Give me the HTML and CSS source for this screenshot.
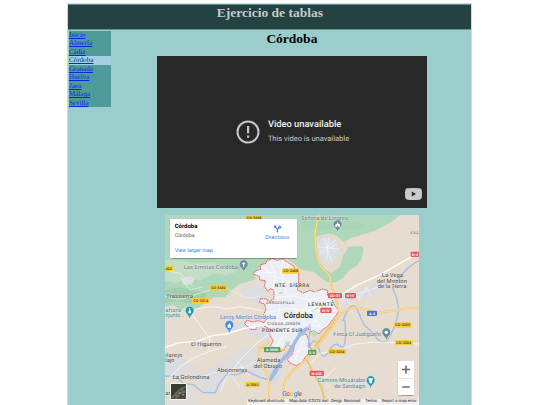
FILE: index.html
```
<!DOCTYPE html>
<html lang="es">

<head>
	<meta charset="UTF-8">
	<meta name="viewport" content="width=device-width, initial-scale=1.0">
	<title>Ejercicio de tablas</title>
	<link rel="stylesheet" href="styles.css">
</head>

<body>
	<div class="page">
		<header>
			<h1>Ejercicio de tablas</h1>
		</header>
		<div class="content">
			<nav>
				<a href="#">Inicio</a>
				<a href="#">Almería</a>
				<a href="#">Cádiz</a>
				<a href="#" class="active">Córdoba</a>
				<a href="#">Granada</a>
				<a href="#">Huelva</a>
				<a href="#">Jaen</a>
				<a href="#">Málaga</a>
				<a href="#">Sevilla</a>
			</nav>
			<main>
				<h2>Córdoba</h2>
				<div class="video">
					<svg class="video-error" viewBox="0 0 24 24">
						<circle cx="12" cy="12" r="10.5" fill="none" stroke="#c6c6c6" stroke-width="2" />
						<path d="M11 6h2.2v7.3H11zM11 15.5h2.2v2.2H11z" fill="#c6c6c6" />
					</svg>
					<div class="video-message">
						<div class="video-title">Video unavailable</div>
						<div class="video-reason">This video is unavailable</div>
					</div>
					<svg class="video-logo" viewBox="0 0 17 12">
						<path d="M2.5.3Q8.5-.3 14.5.3 16.6.4 16.8 2.5 17.2 6 16.8 9.5 16.6 11.6 14.5 11.7 8.5 12.3 2.5 11.7.4 11.6.2 9.5-.2 6 .2 2.5.4.4 2.5.3z" fill="#c9c9c9" />
						<path d="M6.8 3.6v4.8L11 6z" fill="#282828" />
					</svg>
				</div>
				<div class="map">
					<svg class="map-canvas" viewBox="15 15 762 570">
						<defs>
							<path id="pin" d="M0 20Q-2 10-9 4A13 13 0 1 1 9 4Q2 10 0 20z" />
						</defs>
						<rect x="15" y="15" width="762" height="570" fill="#e6dccf" />

						<!-- woodland -->
						<path d="M15 15H720L700 32 672 48 645 62 600 76 572 84 548 98 550 116 566 110 607 108 610 122 604 150 590 168 566 182 548 205 522 218 500 216 480 200 462 186 440 182 420 176 400 160 380 146 345 148 322 160 300 172 280 190 288 208 270 212 240 222 216 240 194 262 160 262 138 278 110 296 80 290 60 300 40 286 15 290z" fill="#aed8b9" />
						<path d="M15 150L60 152 110 160 160 156 200 172 236 182 200 196 160 190 120 212 84 200 50 220 15 212z" fill="#c3dec4" />
						<path d="M62 208L86 198 106 204 98 220 70 226z" fill="#dadfe0" />
						<path d="M15 240L60 232 100 240 140 250 130 268 90 280 50 272 15 280z" fill="#9fcfae" />
						<path d="M420 30L500 40 560 32 620 44 590 60 530 54 480 62 430 50z" fill="#a8d5b6" />
						<path d="M468 82Q510 60 534 82L562 104Q566 120 550 134L540 170 514 190 494 178 474 150z" fill="#e2dacb" />
						<path d="M470 100L490 78 512 84 534 104 540 132 524 150 516 168 494 156 474 132z" fill="#dbdee3" />

						<!-- built-up areas -->
						<path d="M246 230L300 226 318 240 316 286 280 278 244 262zM528 262L570 250 610 236 648 220 668 222 660 244 620 262 580 274 550 290zM190 352L250 336 330 332 330 392 280 384 260 360 200 366z" fill="#dddce0" />
						<path d="M190 455L240 420 290 410 300 450 320 482 300 500 250 480 200 500 180 545 140 560 120 520 140 480zM15 450L60 440 110 470 130 500 110 520 60 500 15 490zM320 485L370 460 366 500 340 530 320 515z" fill="#dcdcde" />
						<path d="M15 530H100L120 585H15z" fill="#dfddda" />

						<!-- city -->
						<path d="M320 152L338 146 352 151 368 147 380 155 402 169 405 184 416 190 416 222 412 240 430 249 450 241 465 246 486 237 503 241 502 255 515 265 524 286 537 302 526 320 514 334 502 350 486 360 478 372 460 362 450 367 444 352 428 360 418 377 405 392 396 410 380 405 366 424 344 426 330 410 340 392 330 376 330 358 310 346 288 352 288 359 272 358 262 348 254 342 260 330 276 336 296 332 312 338 322 324 310 314 318 300 314 282 298 277 301 266 318 267 330 274 342 266 342 240 330 236 324 244 313 230 316 212 300 210 298 199 278 192 288 182 302 178 300 165 318 160z" fill="#eceef3" stroke="#e25f62" stroke-width="2.8" stroke-dasharray="6 1.5" />
						<path d="M428 371L440 374 446 392 450 412 458 424 436 440 428 456 408 467 388 458 382 448 398 432 404 404 414 384z" fill="#eceef3" stroke="#e25f62" stroke-width="2.8" stroke-dasharray="6 1.5" />
						<path d="M376 396l14-2-2 12-12 2zM456 362l12 4 4 10-10 6-8-8zM357 247l12-2v6l-12 2zM452 300l20-10 2 6-18 10z" fill="#b9e0c0" />
						<path d="M467 302l14 2 6 12-12 4zM382 304l10 6-8 8z" fill="#f9efd0" />

						<!-- river -->
						<path d="M777 152Q740 170 718 206T698 236Q720 280 714 312T690 378 650 384 620 352 596 308 562 304 550 330 556 372 540 408 506 424 476 416 452 404 448 378 440 356 424 368 404 402 380 438 360 462 348 482 330 500M330 510L300 502 262 484 230 494 200 494 178 520 166 548 130 548 100 524 70 520 50 500 15 498" fill="none" stroke="#a4bfe6" stroke-width="4" />
						<path d="M444 354L424 366 404 398 380 438 360 458 344 490 328 512" fill="none" stroke="#9fbce8" stroke-width="10" />

						<!-- local streets -->
						<g fill="none" stroke="#fff" stroke-width="2.2">
							<path d="M15 412L60 398 110 394 160 376 200 372 250 356 300 348 350 340 410 322 470 290 530 262 590 226 660 194 720 160 777 128" stroke-width="4" />
							<path d="M96 312L130 360 150 384 146 420M96 312L112 296 160 290 200 296 240 290 310 302M15 520L60 470 110 440 160 420 200 410M180 545L200 500 250 440 290 400 330 370M530 424L580 404 640 396 690 398 777 402M440 470L480 430 520 424M460 480L500 500 530 470" />
							<path d="M528 90L480 128M492 84L516 156M472 110L540 118M476 136L532 100M505 80L500 150" stroke-width="1.5" />
							<path d="M540 290L560 254 600 262 620 232M570 282L550 252M600 270L580 242M632 256L616 228M530 272L660 230" stroke-width="1.5" />
							<path d="M130 500L180 482 260 470 310 440M200 480L240 530M230 450L270 500" stroke-width="1.5" />
						</g>
						<g fill="none" stroke="#fff" stroke-width="2">
							<path d="M310 170L340 200 380 210 412 240M330 155L346 190 340 230 360 290 350 340M370 150L364 190 376 240 400 290 430 330 444 352M342 262L400 258 450 270 500 262M320 308L380 296 440 300 530 302M330 370L380 360 420 340 490 352M346 420L370 370 400 330 440 290 470 242M350 390L376 420M440 250L450 300 480 350M500 250L490 300 450 350M400 430L440 412M404 450L430 390M350 185L300 190M385 165L360 230" />
						</g>
						<path d="M15 258Q50 276 90 260T160 238 200 236 240 256 300 256M60 200L90 240 130 230M15 180L60 190 100 230" fill="none" stroke="#eef3ea" stroke-width="2" />

						<!-- main roads -->
						<g fill="none" stroke="#efc66f" stroke-width="6">
							<path d="M478 15Q462 54 466 100T482 170L508 196 514 226 526 260 534 290 540 310 530 330 510 360 488 390 464 418 440 448 400 480 376 510 368 545 372 585" />
							<path d="M777 292L730 296 690 304 650 308 610 296 580 292 552 304 536 318 510 350 488 378 464 410M330 396L304 410 294 430 302 460 320 490 328 520 326 585M296 412L340 420 376 420M440 448L460 490 484 530 498 585" />
						</g>
						<g fill="none" stroke="#ffe3a2" stroke-width="2.5">
							<path d="M478 15Q462 54 466 100T482 170L508 196 514 226 526 260 534 290 540 310 530 330 510 360 488 390 464 418 440 448 400 480 376 510 368 545 372 585M777 292L730 296 690 304 650 308 610 296 580 292 552 304 536 318M330 396L304 410 294 430 302 460 320 490 328 520 326 585" />
						</g>

						<!-- road numbers -->
						<g fill="#f5ce3a">
							<rect x="257" y="15" width="50" height="16" rx="3" />
							<rect x="15" y="167" width="24" height="16" rx="3" />
							<rect x="148" y="226" width="54" height="16" rx="3" />
							<rect x="96" y="264" width="52" height="16" rx="3" />
							<rect x="366" y="175" width="52" height="16" rx="3" />
							<rect x="702" y="337" width="52" height="16" rx="3" />
							<rect x="705" y="390" width="53" height="16" rx="3" />
							<rect x="505" y="417" width="53" height="16" rx="3" />
							<rect x="256" y="516" width="44" height="16" rx="3" />
						</g>
						<g fill="#e3585f">
							<rect x="504" y="249" width="42" height="16" rx="3" />
							<rect x="555" y="249" width="33" height="16" rx="3" />
							<rect x="481" y="293" width="34" height="16" rx="3" />
							<rect x="752" y="125" width="25" height="16" rx="3" />
							<rect x="449" y="482" width="43" height="16" rx="3" />
						</g>
						<rect x="312" y="411" width="49" height="16" rx="3" fill="#57a05b" />
						<rect x="444" y="419" width="25" height="16" rx="3" fill="#57a05b" />
						<rect x="621" y="302" width="30" height="16" rx="3" fill="#4478c4" />
						<g class="shield dark">
							<text x="282" y="28">CO-3408</text>
							<text x="26" y="179">402</text>
							<text x="175" y="238">CO-3402</text>
							<text x="122" y="276">CO-3314</text>
							<text x="392" y="187">CO-3408</text>
							<text x="728" y="349">CO-3200</text>
							<text x="731" y="402">CO-3204</text>
							<text x="531" y="429">CO-3204</text>
							<text x="278" y="528">A-3051</text>
						</g>
						<g class="shield light">
							<text x="525" y="261">CO-31</text>
							<text x="571" y="261">N-IV</text>
							<text x="498" y="305">N-IV</text>
							<text x="765" y="137">N-4</text>
							<text x="470" y="494">N-432</text>
							<text x="336" y="423">A-3050</text>
							<text x="456" y="431">E-5</text>
							<text x="636" y="314">A-4</text>
						</g>

						<!-- places -->
						<g class="place">
							<text x="19" y="263" textLength="80">Trassierra</text>
							<text x="93" y="409" textLength="91">El Higueron</text>
							<text x="16" y="440" textLength="51">ilarejo</text>
							<text x="16" y="457" textLength="27">lajo</text>
							<text x="171" y="487" textLength="91">Abejorreras</text>
							<text x="38" y="508" textLength="110">La Golondrina</text>
							<text x="290" y="456" textLength="71">Alameda</text>
							<text x="282" y="473" textLength="84">del Obispo</text>
							<text x="665" y="200" textLength="64">La Vega</text>
							<text x="651" y="218" textLength="90">del Montón</text>
							<text x="653" y="235" textLength="86">de la Tierra</text>
							<text x="16" y="554">an</text>
						</g>
						<g class="district">
							<text x="344" y="230" textLength="104">NTE. SIERRA</text>
							<text x="444" y="287" textLength="76">LEVANTE</text>
							<text x="306" y="366" textLength="121">PONIENTE SUR</text>
							<text x="318" y="283" textLength="85" class="minor">ARRUZAFILLA</text>
							<text x="322" y="346" textLength="98" class="minor">CIUDAD JARDÍN</text>
							<text x="750" y="71" textLength="26" class="minor">VAL</text>
						</g>
						<text x="371" y="325" textLength="88" class="city">Córdoba</text>
						<g class="poi gray">
							<text x="71" y="178" textLength="163">Las Ermitas Córdoba</text>
							<text x="423" y="29" textLength="141">Señora de Linares</text>
							<text x="520" y="379" textLength="143">Finca El Judigüelo</text>
						</g>
						<g class="poi teal">
							<text x="16" y="306" textLength="58">ahara -</text>
							<text x="16" y="322" textLength="56">njunto...</text>
							<text x="472" y="516" textLength="143">Camino Mozárabe</text>
							<text x="523" y="534" textLength="92">de Santiago</text>
						</g>
						<text x="180" y="328" textLength="168" class="poi blue">Leroy Merlin Córdoba</text>

						<!-- pins -->
						<g stroke="#fff" stroke-width="1">
							<use href="#pin" x="251" y="168" fill="#6f8a98" />
							<use href="#pin" x="533" y="48" fill="#6f8a98" />
							<use href="#pin" x="679" y="372" fill="#6f8a98" />
							<use href="#pin" x="89" y="307" fill="#239aab" />
							<use href="#pin" x="632" y="516" fill="#239aab" />
							<use href="#pin" x="208" y="350" fill="#4687ef" />
						</g>
						<g fill="#fff">
							<path d="M249.5 156h3v4h4v3h-4v9h-3v-9h-4v-3h4z" />
							<path d="M526 51v-7l3-3 2 2v-3l2-4 2 4v3l2-2 3 3v7h-5v-4h-4v4z" />
							<circle cx="679" cy="367" r="5" />
							<path d="M88 294h2.5v6l2.5 4v6h-7.5v-6l2.5-4z" />
							<path d="M626 504h3v2.500h1.500V504h3v2.500h1.500V504h3v6l-2.500 2 .5 8h-8l.5-8-2.500-2z" />
							<path d="M203 345h2q0-5 3-5t3 5h2v8h-10z" />
						</g>

						<text x="366" y="557" textLength="60" class="google"><tspan fill="#4285f4">G</tspan><tspan fill="#ea4335">o</tspan><tspan fill="#fbbc05">o</tspan><tspan fill="#4285f4">g</tspan><tspan fill="#34a853">l</tspan><tspan fill="#ea4335">e</tspan></text>
					</svg>
					<div class="map-card">
						<div class="map-info">
							<strong>Córdoba</strong>
							<span>Córdoba</span>
							<a href="#">View larger map</a>
						</div>
						<a href="#" class="directions">
							<svg viewBox="0 0 10 10">
								<path d="M5 9.5V6L2.5 3.2M5 6L6.5 3.5H8" fill="none" stroke="#4285e8" stroke-width="1.3" />
								<path d="M1.2 1.7h3.2L1.2 4.900zM7.2 1.2L9.5 3.5 7.2 5.8z" fill="#4285e8" />
							</svg>
							Directions
						</a>
					</div>
					<svg class="satellite" viewBox="0 0 16 16">
						<rect width="16" height="16" fill="#4a4c3e" />
						<path d="M0 0h16v5L9 7 4 12 0 13z" fill="#353f33" />
						<path d="M1 15L6 9 11 5 16 3M5 16L9 10 15 8" fill="none" stroke="#777360" stroke-width="1.5" />
						<path d="M8 9h2v1H8zM11 6h2v1h-2zM5 12h1v1H5zM12 11h2v1h-2z" fill="#b8aa94" />
					</svg>
					<div class="zoom-buttons">
						<svg viewBox="0 0 16 17"><path d="M4 8.5h8M8 4.5v8" /></svg>
						<svg viewBox="0 0 16 17"><path d="M4 8.5h8" /></svg>
					</div>
					<div class="map-footer">
						<span>Keyboard shortcuts</span>
						<span>Map data ©2023 Inst. Geogr. Nacional</span>
						<span>Terms</span>
						<span>Report a map error</span>
					</div>
				</div>
			</main>
		</div>
	</div>
</body>

</html>
```
FILE: styles.css
```
body {
	margin: 0;
	background-color: #fff;
	font-family: "Liberation Serif", serif;
	overflow: hidden;
}

.page {
	box-sizing: border-box;
	width: 405px;
	height: 402px;
	margin: 3px 0 0 67.4px;
	border: 1px solid #c5e2e2;
	border-bottom: 0;
	background-color: #9ccdcd;
}

header {
	box-sizing: border-box;
	height: 26px;
	border: 1px solid #688f8e;
	border-width: 1px 0;
	background-color: #234241;
}

h1 {
	margin: 0;
	color: #c3cbca;
	font-size: 13.5px;
	line-height: 15px;
	text-align: center;
}

.content {
	display: flex;
}

nav {
	width: 42px;
	padding: 1px 0 0 .5px;
	margin-right: 1.5px;
	flex: none;
}

nav a {
	display: block;
	height: 8.45px;
	background-color: #4d9b9a;
	color: #0828d8;
	font-size: 7.1px;
	line-height: 8.45px;
	text-rendering: geometricPrecision;
}

nav .active {
	background-color: #a5cfe0;
}

main {
	display: flex;
	flex: 1;
	flex-direction: column;
	align-items: center;
}

h2 {
	height: 17px;
	margin: 1px 0 7.6px;
	font-size: 13.5px;
	line-height: 16px;
}

.video {
	position: relative;
	display: flex;
	box-sizing: border-box;
	width: 270px;
	height: 152px;
	padding: 64px 0 0 79px;
	background-color: #282828;
	font-family: Roboto, sans-serif;
}

.video-error {
	width: 24px;
	height: 24px;
}

.video-message {
	margin-left: 8px;
	text-rendering: geometricPrecision;
}

.video-title {
	color: #eee;
	font-size: 9.3px;
	font-weight: 500;
	line-height: 10px;
}

.video-reason {
	margin-top: 4px;
	color: #c8c8c8;
	font-size: 7.5px;
	line-height: 10px;
}

.video-logo {
	position: absolute;
	right: 5px;
	bottom: 7.5px;
	width: 17px;
	height: 12px;
}

.map {
	position: relative;
	width: 253.5px;
	height: 190px;
	margin-top: 7px;
	overflow: hidden;
	font-family: Roboto, sans-serif;
	text-rendering: geometricPrecision;
}

.map-canvas {
	display: block;
	width: 254px;
	height: 190px;
}

.map-canvas text {
	paint-order: stroke;
	stroke: rgba(244, 241, 235, .6);
	stroke-width: 2px;
	stroke-linejoin: round;
}

.map-canvas .shield text {
	font-size: 11px;
	font-weight: 700;
	stroke: none;
	text-anchor: middle;
}

.dark {
	fill: #594b1c;
}

.light {
	fill: #fff;
}

.place {
	fill: #3f3f3f;
	font-size: 17.5px;
}

.district {
	fill: #4a4a4a;
	font-size: 15px;
	font-weight: 500;
}

.district .minor {
	fill: #707070;
	font-size: 12px;
}

.city {
	fill: #222;
	font-size: 23px;
	font-weight: 500;
}

.poi {
	font-size: 17.5px;
}

.gray {
	fill: #5f7988;
}

.teal {
	fill: #238da0;
}

.blue {
	fill: #3d80df;
}

.google {
	font-size: 21px;
	font-weight: 500;
}

.map-card {
	position: absolute;
	top: 4px;
	left: 4.5px;
	display: flex;
	justify-content: space-between;
	box-sizing: border-box;
	width: 127.5px;
	height: 39px;
	padding: 4px 8px 0 5px;
	background-color: #fff;
	box-shadow: 0 .5px 1px rgba(0, 0, 0, .3);
	font-size: 5.3px;
}

.map-card a {
	color: #347de2;
	text-decoration: none;
}

.map-info {
	display: flex;
	flex-direction: column;
	line-height: 8px;
}

.map-info strong {
	color: #000;
	font-size: 6px;
	font-weight: 700;
}

.map-info span {
	margin-top: 1px;
	color: #666;
}

.map-info a {
	margin-top: 7px;
}

.directions {
	display: flex;
	flex-direction: column;
	align-items: center;
	line-height: 8px;
}

.directions svg {
	width: 9px;
	height: 9px;
	margin: 1px 0 1.5px;
}

.satellite {
	position: absolute;
	bottom: 5px;
	left: 5px;
	width: 15px;
	height: 15px;
	border: 1px solid #f4f4ef;
	border-radius: 1px;
}

.zoom-buttons {
	position: absolute;
	right: 5px;
	bottom: 9.5px;
	width: 16px;
	height: 34px;
	background-color: #fff;
	box-shadow: 0 .5px 1px rgba(0, 0, 0, .3);
}

.zoom-buttons svg {
	display: block;
	width: 16px;
	height: 17px;
	fill: none;
	stroke: #666;
	stroke-width: 1.5;
}

.zoom-buttons svg + svg {
	box-sizing: border-box;
	border-top: 1px solid #e6e6e6;
}

.map-footer {
	position: absolute;
	right: 0;
	bottom: 0;
	display: flex;
	justify-content: space-between;
	box-sizing: border-box;
	width: 172px;
	padding: 0 2px 0 1.5px;
	background-color: rgba(245, 245, 245, .75);
	color: #111;
	font-size: 4.2px;
	line-height: 5.5px;
	white-space: nowrap;
}
```
